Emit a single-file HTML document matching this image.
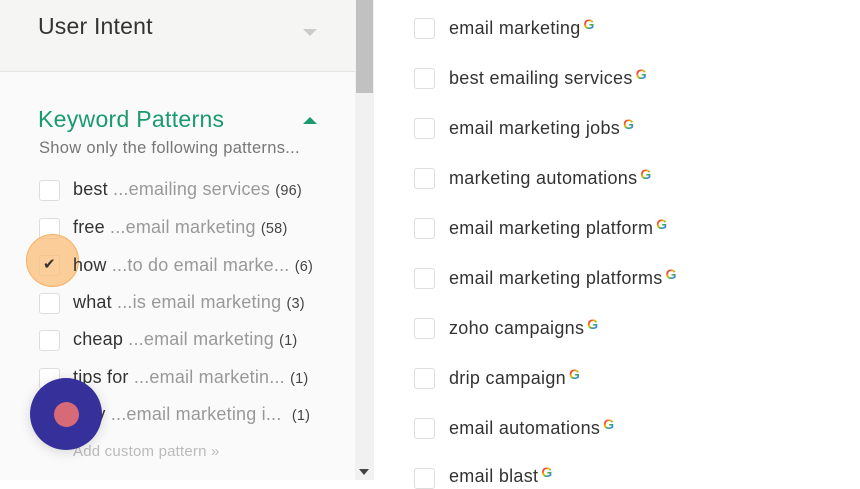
<!DOCTYPE html>
<html><head><style>
*{margin:0;padding:0;box-sizing:border-box}
body{width:860px;height:480px;overflow:hidden;background:#fff;font-family:"Liberation Sans",sans-serif;position:relative}
.left{position:absolute;left:0;top:0;width:355px;height:480px;background:#fafafa}
.top{position:absolute;left:0;top:0;width:355px;height:72px;background:#f5f5f4;border-bottom:1px solid #e4e4e4}
.ui{position:absolute;left:38px;top:13px;font-size:23px;color:#333;letter-spacing:0.2px}
.tri{position:absolute;width:0;height:0;border-left:7px solid transparent;border-right:7px solid transparent}
.sb{position:absolute;left:355px;top:0;width:19px;height:480px;background:#f1f1f1}
.thumb{position:absolute;left:356px;top:0;width:17px;height:93px;background:#c1c1c1}
.kp{position:absolute;left:38px;top:106px;font-size:23px;color:#1a9a6e;letter-spacing:0.3px}
.sub{position:absolute;left:39px;top:139px;font-size:16.5px;color:#777;letter-spacing:0.3px}
.cb{position:absolute;width:21px;height:21px;border:1px solid #ddd;border-radius:3px;background:#fff}
.lr{position:absolute;left:73px;font-size:18px;color:#333;white-space:nowrap;letter-spacing:0.2px}
.lr .g{color:#999}.lr .n{font-size:14.5px;color:#444}
.rr{position:absolute;left:449px;font-size:18px;color:#333;white-space:nowrap;letter-spacing:0.3px}
.G{display:inline-block;font-weight:bold;font-size:14px;vertical-align:5px;margin-left:3px;background:linear-gradient(135deg,#ea4335 30%,#fbbc05 45%,#34a853 60%,#4285f4 75%);-webkit-background-clip:text;color:transparent}
</style></head><body>
<div class="left">
<div class="top"><div class="ui">User Intent</div><div class="tri" style="left:303px;top:29px;border-top:7px solid #ccc"></div></div>
<div class="kp">Keyword Patterns</div>
<div class="tri" style="left:303px;top:117px;border-bottom:7px solid #1a9a6e"></div>
<div class="sub">Show only the following patterns...</div>
</div>
<div class="sb"></div><div class="thumb"></div>
<div class="tri" style="left:359px;top:469px;border-left-width:5px;border-right-width:5px;border-top:6px solid #444"></div>

<div class="cb" style="left:39px;top:180px"></div><div class="lr" style="top:179px">best <span class="g">...emailing services</span> <span class="n">(96)</span></div>
<div class="cb" style="left:39px;top:218px"></div><div class="lr" style="top:217px">free <span class="g">...email marketing</span> <span class="n">(58)</span></div>
<div class="cb" style="left:39px;top:255px"></div>
<div style="position:absolute;left:26px;top:234px;width:53px;height:53px;border-radius:50%;background:rgba(250,190,120,.75);border:1.5px solid #f5b060"></div>
<div style="position:absolute;left:43px;top:255px;font-size:15px;color:#333">✔</div>
<div class="lr" style="top:255px">how <span class="g">...to do email marke...</span> <span class="n">(6)</span></div>
<div class="cb" style="left:39px;top:293px"></div><div class="lr" style="top:292px">what <span class="g">...is email marketing</span> <span class="n">(3)</span></div>
<div class="cb" style="left:39px;top:330px"></div><div class="lr" style="top:329px">cheap <span class="g">...email marketing</span> <span class="n">(1)</span></div>
<div class="cb" style="left:39px;top:368px"></div><div class="lr" style="top:367px">tips for <span class="g">...email marketin...</span> <span class="n">(1)</span></div>
<div class="lr" style="top:404px">why <span class="g">...email marketing i...</span> &nbsp;<span class="n">(1)</span></div>
<div style="position:absolute;left:73px;top:443px;font-size:15px;color:#bbb;letter-spacing:0.2px">Add custom pattern »</div>
<div style="position:absolute;left:30px;top:378px;width:72px;height:72px;border-radius:50%;background:#35309a;box-shadow:0 2px 12px rgba(0,0,0,.15)"></div>
<div style="position:absolute;left:54px;top:402px;width:25px;height:25px;border-radius:50%;background:#d76a77"></div>

<div class="cb" style="left:414px;top:18px"></div><div class="rr" style="top:16px">email marketing<span class="G">G</span></div>
<div class="cb" style="left:414px;top:68px"></div><div class="rr" style="top:66px">best emailing services<span class="G">G</span></div>
<div class="cb" style="left:414px;top:118px"></div><div class="rr" style="top:116px">email marketing jobs<span class="G">G</span></div>
<div class="cb" style="left:414px;top:168px"></div><div class="rr" style="top:166px">marketing automations<span class="G">G</span></div>
<div class="cb" style="left:414px;top:218px"></div><div class="rr" style="top:216px">email marketing platform<span class="G">G</span></div>
<div class="cb" style="left:414px;top:268px"></div><div class="rr" style="top:266px">email marketing platforms<span class="G">G</span></div>
<div class="cb" style="left:414px;top:318px"></div><div class="rr" style="top:316px">zoho campaigns<span class="G">G</span></div>
<div class="cb" style="left:414px;top:368px"></div><div class="rr" style="top:366px">drip campaign<span class="G">G</span></div>
<div class="cb" style="left:414px;top:418px"></div><div class="rr" style="top:416px">email automations<span class="G">G</span></div>
<div class="cb" style="left:414px;top:468px"></div><div class="rr" style="top:464px">email blast<span class="G">G</span></div>
</body></html>
